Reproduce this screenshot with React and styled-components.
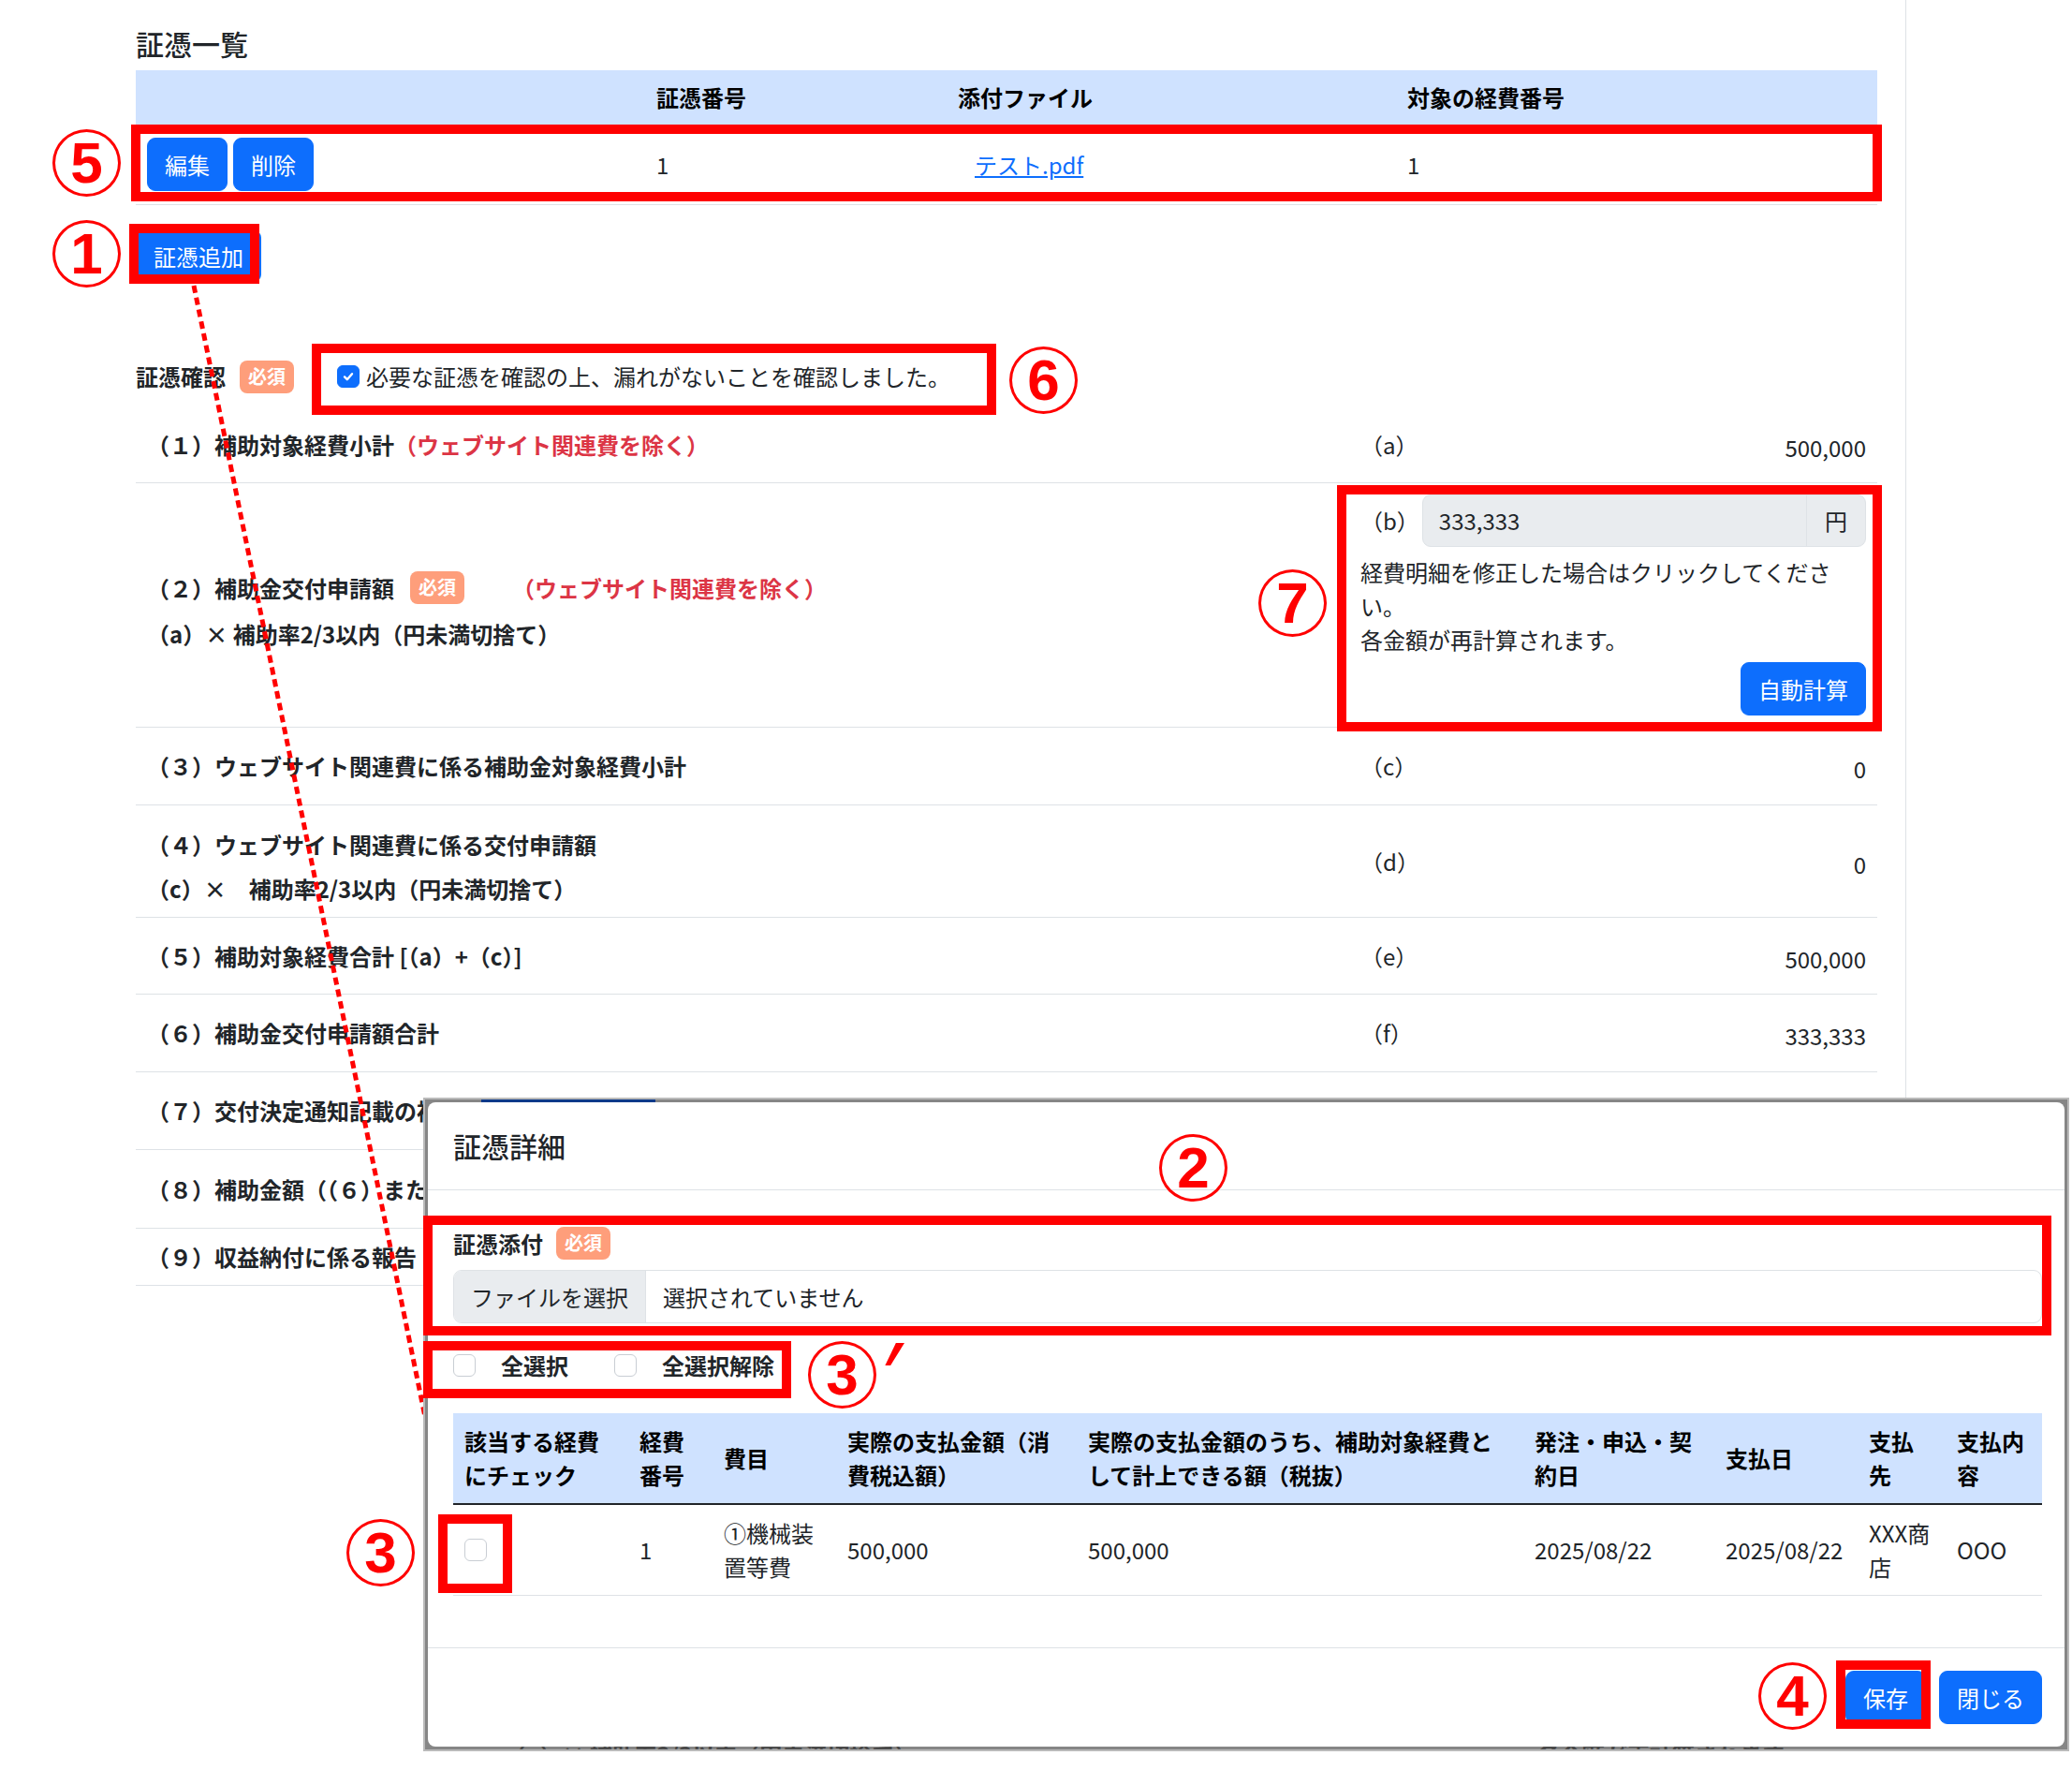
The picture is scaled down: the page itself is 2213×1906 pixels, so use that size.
import React from 'react';
import styled, { createGlobalStyle } from 'styled-components';

const GlobalStyle = createGlobalStyle`
  html, body {
    margin: 0;
    padding: 0;
    background: #fff;
  }
  body {
    font-family: "Noto Sans CJK JP", "Noto Sans", sans-serif;
    font-size: 24px;
    line-height: 36px;
    color: #212529;
  }
  * {
    box-sizing: border-box;
  }
`;

const Page = styled.div`
  position: relative;
  width: 2213px;
  height: 1906px;
  overflow: hidden;
`;

const Main = styled.main`
  width: 2036px;
  height: 1860px;
  padding: 28px 30px 0 145px;
  border-right: 1px solid #dee2e6;
`;

const Title = styled.h5`
  margin: 0 0 11px;
  font-size: 30px;
  font-weight: 500;
  line-height: 36px;
`;

const ListGrid = styled.div`
  display: grid;
  grid-template-columns: 544px 322px 480px 1fr;
`;

const HeadCell = styled.div`
  background: #cfe2ff;
  color: #000;
  font-weight: 700;
  padding: 11px 12px;
  line-height: 36px;
`;

const BodyCell = styled.div`
  display: flex;
  align-items: center;
  gap: 6px;
  height: 86px;
  padding: 14px 12px;
  border-bottom: 1px solid #dee2e6;
`;

const Button = styled.button`
  font: inherit;
  line-height: 36px;
  padding: 9.5px 18px;
  border: 1px solid #0d6efd;
  background: #0d6efd;
  color: #fff;
  border-radius: 9px;
  white-space: nowrap;
`;

const FileLink = styled.a`
  margin-left: 18px;
  color: #0d6efd;
  text-decoration: underline;
`;

const AddWrap = styled.div`
  margin-top: 26px;
`;

const ConfirmRow = styled.div`
  display: flex;
  align-items: center;
  height: 64px;
  margin-top: 68px;
`;

const Strong = styled.span`
  font-weight: 700;
  white-space: nowrap;
`;

const Badge = styled.span`
  display: inline-block;
  margin-left: ${p => p.$gap}px;
  padding: 7px 9px 8px;
  border-radius: 8px;
  background: #fe9e7b;
  color: #fff;
  font-size: 20px;
  font-weight: 700;
  line-height: 20px;
`;

const CheckLabel = styled.label`
  display: flex;
  align-items: center;
  gap: 7px;
  margin-left: ${p => p.$gap}px;
  white-space: nowrap;
`;

const CheckBox = styled.span`
  display: inline-flex;
  align-items: center;
  justify-content: center;
  flex-shrink: 0;
  width: 24px;
  height: 24px;
  border-radius: 6px;
  border: 1px solid ${p => (p.$checked ? '#0d6efd' : '#c9ced4')};
  background: ${p => (p.$checked ? '#0d6efd' : '#fff')};
`;

const SumRow = styled.div`
  display: grid;
  grid-template-columns: 1296px 1fr;
  height: ${p => p.$h}px;
  border-bottom: 1px solid #dee2e6;
`;

const LabelCell = styled.div`
  display: flex;
  flex-direction: column;
  justify-content: center;
  gap: ${p => p.$gap || 0}px;
  padding: ${p => (p.$multi ? '12px 12px 0' : '0 12px')};
  font-weight: 700;
`;

const Line = styled.div`
  display: flex;
  align-items: center;
  white-space: pre;
  line-height: 36px;
`;

const Red = styled.span`
  margin-left: ${p => p.$gap || 0}px;
  color: #dc3545;
  font-weight: 700;
`;

const ValueCell = styled.div`
  display: flex;
  align-items: center;
  justify-content: space-between;
  padding: 0 12px;
`;

const Amount = styled.span`
  padding-top: 6px;
`;

const CalcCell = styled.div`
  display: flex;
  flex-direction: column;
  padding: 12px;
`;

const InputRow = styled.div`
  display: flex;
  align-items: center;
`;

const InputGroup = styled.div`
  display: flex;
  flex: 1;
  height: 56px;
  margin-left: 3px;
  border: 1px solid #dee2e6;
  border-radius: 9px;
  background: #e9ecef;
  overflow: hidden;
`;

const InputValue = styled.div`
  flex: 1;
  padding: 0 17px;
  line-height: 54px;
`;

const Addon = styled.div`
  width: 63px;
  border-left: 1px solid #dee2e6;
  text-align: center;
  line-height: 54px;
`;

const Note = styled.p`
  margin: 9px 0 0;
  line-height: 36px;
`;

const CalcButton = styled(Button)`
  align-self: flex-end;
  margin-top: 6px;
`;

const ModalFrame = styled.div`
  position: absolute;
  left: 452px;
  top: 1172px;
  width: 1758px;
  height: 698px;
  border: 2px solid #bababa;
  padding: 3px;
  background: #868686;
`;

const Sliver = styled.div`
  position: absolute;
  left: 60px;
  top: 0;
  width: 186px;
  height: 3px;
  background: #0c3a8a;
`;

const Ghost = styled.div`
  position: absolute;
  left: ${p => p.$x}px;
  bottom: 0;
  height: 5px;
  overflow: hidden;
  color: #4a4a4a;
  font-weight: 700;
  white-space: nowrap;
  line-height: 36px;

  > span {
    display: block;
    margin-top: -8px;
  }
`;

const ModalContent = styled.div`
  position: relative;
  display: flex;
  flex-direction: column;
  height: 100%;
  background: #fff;
  border-radius: 8px;
`;

const ModalHeader = styled.div`
  padding: 24px 24px 24px 27px;
  border-bottom: 1px solid #dee2e6;
`;

const ModalTitle = styled.h5`
  margin: 0;
  font-size: 30px;
  font-weight: 500;
  line-height: 45px;
`;

const ModalBody = styled.div`
  flex: 1;
  padding: 39px 24px 24px 27px;
`;

const FieldLabel = styled.div`
  display: flex;
  align-items: center;
  height: 35px;
`;

const FileInput = styled.div`
  display: flex;
  height: 57px;
  margin-top: 11px;
  border: 1px solid #dee2e6;
  border-radius: 9px;
  overflow: hidden;
`;

const FileButton = styled.div`
  padding: 0 18px;
  background: #e9ecef;
  border-right: 1px solid #dee2e6;
  line-height: 55px;
`;

const FileText = styled.div`
  padding: 0 18px;
  line-height: 55px;
`;

const SelectRow = styled.div`
  display: flex;
  align-items: center;
  height: 36px;
  margin-top: 27px;
`;

const SelectItem = styled.label`
  display: flex;
  align-items: center;
  gap: 27px;
  margin-left: ${p => p.$gap || 0}px;
  font-weight: 700;
`;

const DetailGrid = styled.div`
  display: grid;
  grid-template-columns: 187px 90px 132px 257px 477px 204px 153px 94px 1fr;
  margin-top: 33px;
`;

const DHead = styled.div`
  display: flex;
  align-items: center;
  padding: 12px;
  background: #cfe2ff;
  color: #000;
  font-weight: 700;
  line-height: 36px;
  white-space: nowrap;
  border-bottom: 2px solid #212529;
`;

const DCell = styled.div`
  display: flex;
  align-items: center;
  padding: 12px;
  line-height: 36px;
  white-space: nowrap;
  border-bottom: 1px solid #dee2e6;
`;

const ModalFooter = styled.div`
  display: flex;
  justify-content: flex-end;
  gap: 14px;
  padding: 24px;
  border-top: 1px solid #dee2e6;
`;

const RedBox = styled.div`
  position: absolute;
  left: ${p => p.$x}px;
  top: ${p => p.$y}px;
  width: ${p => p.$w}px;
  height: ${p => p.$h}px;
  border: 10px solid #ff0000;
`;

const Circled = styled.div`
  position: absolute;
  left: ${p => p.$x}px;
  top: ${p => p.$y}px;
  width: 73px;
  height: 72px;
  display: flex;
  align-items: center;
  justify-content: center;
  border: 3px solid #ff0000;
  border-radius: 50%;
  color: #ff0000;
  font-family: "Liberation Sans", Arial, sans-serif;
  font-size: 62px;
  font-weight: 700;
  line-height: 1;
`;

const Prime = styled.div`
  position: absolute;
  left: 942px;
  top: 1434px;
  width: 24px;
  height: 24px;
  background: #ff0000;
  clip-path: polygon(62% 0, 100% 0, 38% 100%, 14% 100%);
`;

const Overlay = styled.svg`
  position: absolute;
  left: 0;
  top: 0;
`;

const Check = () => (
  <svg width="16" height="16" viewBox="0 0 20 20">
    <path d="M5 10.5l3.5 3.5L15 6.5" fill="none" stroke="#fff" strokeWidth="3" strokeLinecap="round" strokeLinejoin="round" />
  </svg>
);

const rows = [
  { h: 82, label: [<>（１）補助対象経費小計<Red>（ウェブサイト関連費を除く）</Red></>], letter: '（a）', value: '500,000' },
  { h: 261, calc: true },
  { h: 83, label: ['（３）ウェブサイト関連費に係る補助金対象経費小計'], letter: '（c）', value: '0' },
  { h: 120, gap: 11, label: ['（４）ウェブサイト関連費に係る交付申請額', '（c）×　補助率2/3以内（円未満切捨て）'], letter: '（d）', value: '0' },
  { h: 82, label: ['（５）補助対象経費合計 [（a）+（c）]'], letter: '（e）', value: '500,000' },
  { h: 83, label: ['（６）補助金交付申請額合計'], letter: '（f）', value: '333,333' },
  { h: 83, label: ['（７）交付決定通知記載の補助金額'] },
  { h: 84, label: ['（８）補助金額（（６）または（７）のいずれか低い額）'] },
  { h: 61, label: ['（９）収益納付に係る報告'] },
];

const heads = [
  ['該当する経費', 'にチェック'],
  ['経費', '番号'],
  ['費目'],
  ['実際の支払金額（消', '費税込額）'],
  ['実際の支払金額のうち、補助対象経費と', 'して計上できる額（税抜）'],
  ['発注・申込・契', '約日'],
  ['支払日'],
  ['支払', '先'],
  ['支払内', '容'],
];

const cells = [
  null,
  ['1'],
  ['①機械装', '置等費'],
  ['500,000'],
  ['500,000'],
  ['2025/08/22'],
  ['2025/08/22'],
  ['XXX商', '店'],
  ['OOO'],
];

const lines = parts => parts.map((t, i) => (
  <React.Fragment key={i}>{i > 0 && <br />}{t}</React.Fragment>
));

const SummaryRow = ({ row }) => {
  if (row.calc) {
    return (
      <SumRow $h={row.h}>
        <LabelCell $multi $gap={13}>
          <Line>
            （２）補助金交付申請額<Badge $gap={17}>必須</Badge>
            <Red $gap={51}>（ウェブサイト関連費を除く）</Red>
          </Line>
          <Line>（a）× 補助率2/3以内（円未満切捨て）</Line>
        </LabelCell>
        <CalcCell>
          <InputRow>
            <span>（b）</span>
            <InputGroup>
              <InputValue>333,333</InputValue>
              <Addon>円</Addon>
            </InputGroup>
          </InputRow>
          <Note>
            経費明細を修正した場合はクリックしてくださ<br />い。<br />各金額が再計算されます。
          </Note>
          <CalcButton>自動計算</CalcButton>
        </CalcCell>
      </SumRow>
    );
  }
  return (
    <SumRow $h={row.h}>
      <LabelCell $multi={row.label.length > 1} $gap={row.gap}>
        {row.label.map((l, i) => <Line key={i}>{l}</Line>)}
      </LabelCell>
      <ValueCell>
        <span>{row.letter}</span>
        <Amount>{row.value}</Amount>
      </ValueCell>
    </SumRow>
  );
};

const DetailModal = () => (
  <ModalFrame>
    <Sliver />
    <Ghost $x={84}><span>（a）× 補助率2/3以内（円未満切捨て）</span></Ghost>
    <Ghost $x={1188}><span>各金額が再計算されます。</span></Ghost>
    <ModalContent>
      <ModalHeader>
        <ModalTitle>証憑詳細</ModalTitle>
      </ModalHeader>
      <ModalBody>
        <FieldLabel>
          <Strong>証憑添付</Strong>
          <Badge $gap={14}>必須</Badge>
        </FieldLabel>
        <FileInput>
          <FileButton>ファイルを選択</FileButton>
          <FileText>選択されていません</FileText>
        </FileInput>
        <SelectRow>
          <SelectItem><CheckBox />全選択</SelectItem>
          <SelectItem $gap={49}><CheckBox />全選択解除</SelectItem>
        </SelectRow>
        <DetailGrid>
          {heads.map((h, i) => <DHead key={i}><div>{lines(h)}</div></DHead>)}
          {cells.map((c, i) => (
            <DCell key={i}>{c ? <div>{lines(c)}</div> : <CheckBox />}</DCell>
          ))}
        </DetailGrid>
      </ModalBody>
      <ModalFooter>
        <Button>保存</Button>
        <Button>閉じる</Button>
      </ModalFooter>
    </ModalContent>
  </ModalFrame>
);

const boxes = [
  [140, 133, 1870, 82],
  [138, 239, 139, 64],
  [333, 367, 731, 76],
  [1428, 518, 582, 263],
  [452, 1298, 1739, 128],
  [452, 1432, 393, 61],
  [468, 1617, 79, 84],
  [1961, 1773, 101, 73],
];

const marks = [
  [56, 138, '5'],
  [56, 235, '1'],
  [1078, 370, '6'],
  [1344, 608, '7'],
  [1238, 1211, '2'],
  [863, 1432, '3'],
  [370, 1622, '3'],
  [1878, 1775, '4'],
];

export default function App() {
  return (
    <>
      <GlobalStyle />
      <Page>
        <Main>
          <Title>証憑一覧</Title>
          <ListGrid>
            <HeadCell />
            <HeadCell>証憑番号</HeadCell>
            <HeadCell>添付ファイル</HeadCell>
            <HeadCell>対象の経費番号</HeadCell>
            <BodyCell>
              <Button>編集</Button>
              <Button>削除</Button>
            </BodyCell>
            <BodyCell>1</BodyCell>
            <BodyCell><FileLink>テスト.pdf</FileLink></BodyCell>
            <BodyCell>1</BodyCell>
          </ListGrid>
          <AddWrap>
            <Button>証憑追加</Button>
          </AddWrap>
          <ConfirmRow>
            <Strong>証憑確認</Strong>
            <Badge $gap={15}>必須</Badge>
            <CheckLabel $gap={46}>
              <CheckBox $checked><Check /></CheckBox>
              必要な証憑を確認の上、漏れがないことを確認しました。
            </CheckLabel>
          </ConfirmRow>
          {rows.map((r, i) => <SummaryRow key={i} row={r} />)}
        </Main>

        <Overlay width="2213" height="1906">
          <line x1="207" y1="305" x2="455" y2="1518" stroke="#ff0000" strokeWidth="5" strokeDasharray="8 5" />
        </Overlay>

        <DetailModal />

        {boxes.map(([x, y, w, h], i) => <RedBox key={i} $x={x} $y={y} $w={w} $h={h} />)}
        {marks.map(([x, y, d], i) => <Circled key={i} $x={x} $y={y}>{d}</Circled>)}
        <Prime />
      </Page>
    </>
  );
}
